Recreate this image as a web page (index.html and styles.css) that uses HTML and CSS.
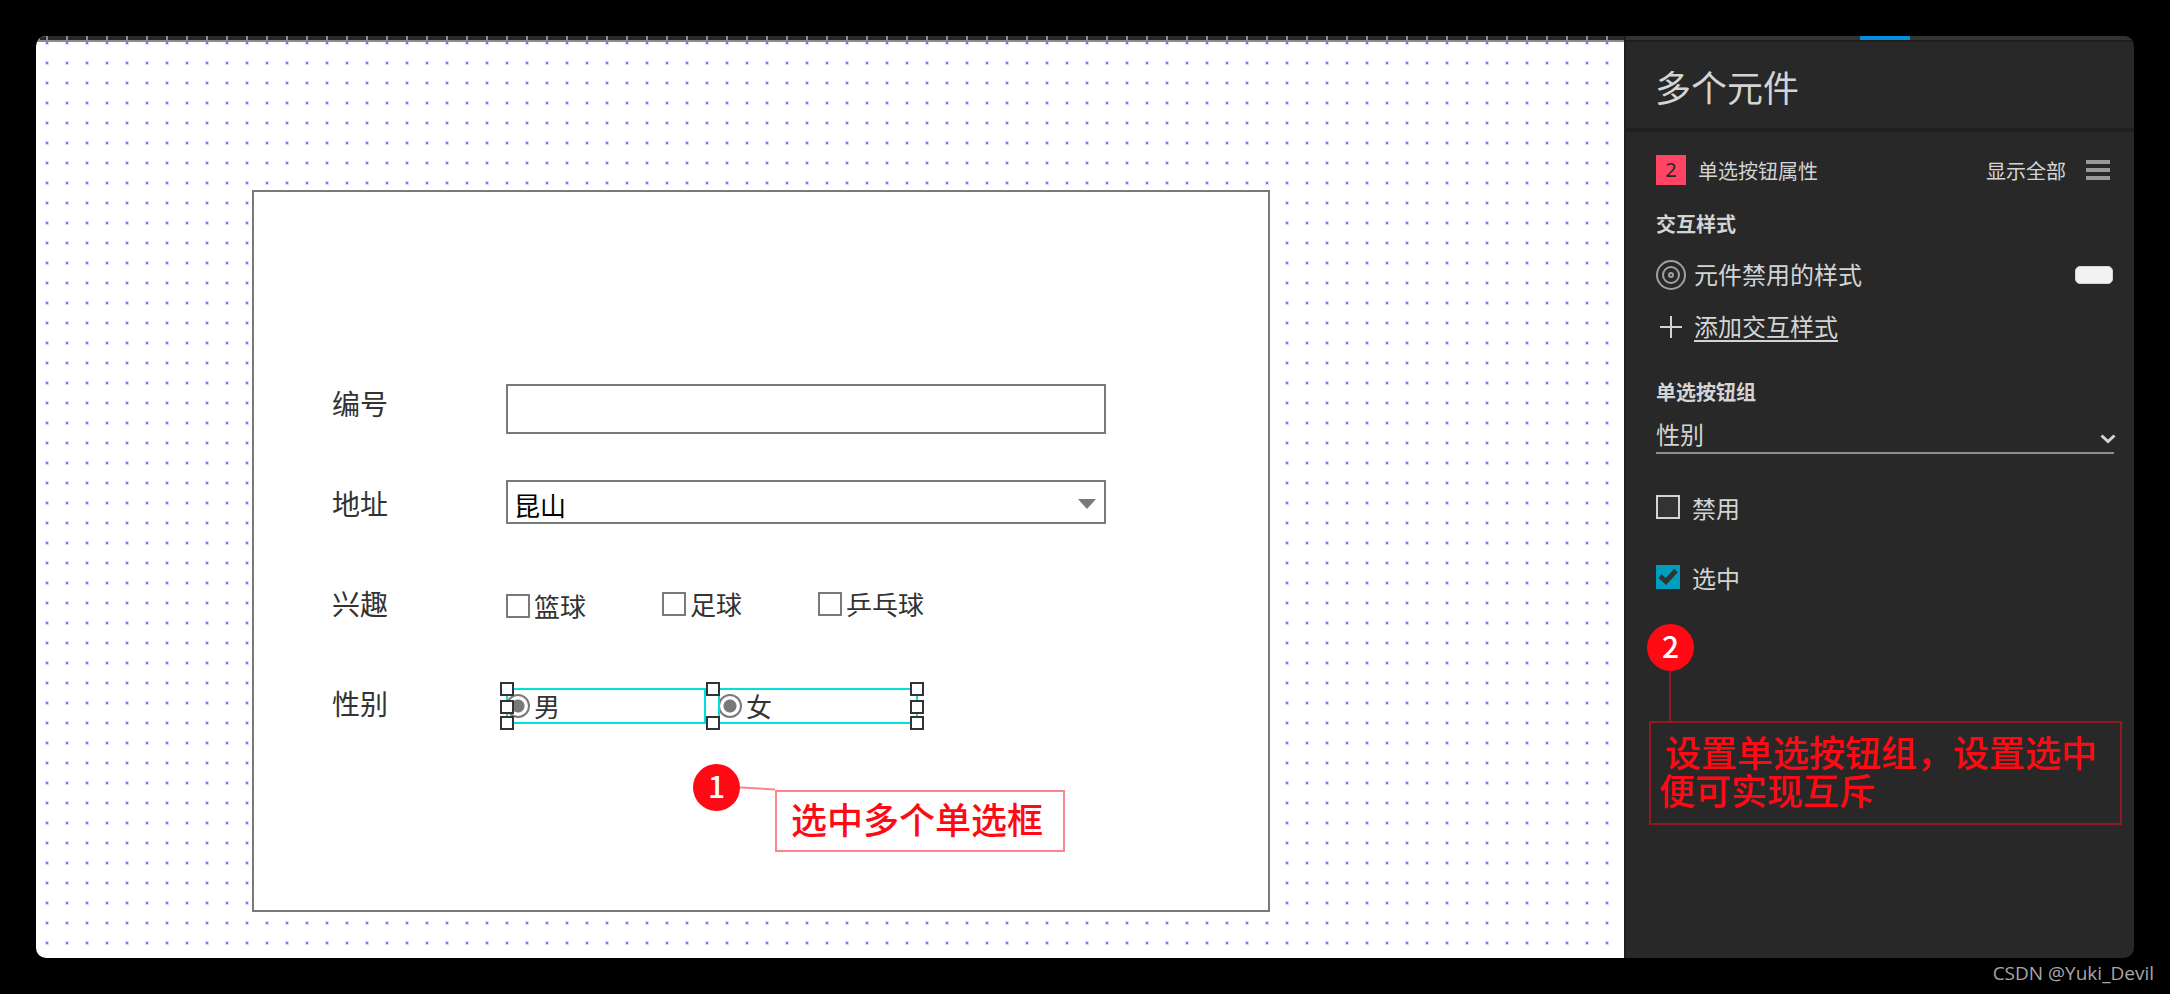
FILE: index.html
```html
<!DOCTYPE html>
<html lang="zh-CN">
<head>
    <meta charset="UTF-8">
    <meta name="viewport" content="width=device-width, initial-scale=1.0">
    <title>多个元件</title>
    <link rel="stylesheet" href="styles.css">
</head>
<body>

    <div class="window">
        <main class="workspace">
            <div class="ruler"></div>
            <div class="canvas">
                <form class="artboard">
                    <div class="row">
                        <label for="number">编号</label>
                        <input type="text" id="number" class="text-box">
                    </div>
                    <div class="row">
                        <label for="address">地址</label>
                        <div class="drop-down">
                            <select id="address">
                                <option>昆山</option>
                            </select>
                            <svg width="18" height="10" viewBox="0 0 18 10"><path d="M0 0h18L9 10z" fill="#797979"/></svg>
                        </div>
                    </div>
                    <div class="row">
                        <span class="row-title">兴趣</span>
                        <div class="checks">
                            <label><input type="checkbox">篮球</label>
                            <label><input type="checkbox">足球</label>
                            <label><input type="checkbox">乒乓球</label>
                        </div>
                    </div>
                    <div class="row">
                        <span class="row-title">性别</span>
                        <div class="radios">
                            <label><input type="radio" name="male" checked>男</label>
                            <label><input type="radio" name="female" checked>女</label>
                            <i class="handle left top"></i>
                            <i class="handle left middle"></i>
                            <i class="handle left bottom"></i>
                            <i class="handle center top"></i>
                            <i class="handle center bottom"></i>
                            <i class="handle right top"></i>
                            <i class="handle right middle"></i>
                            <i class="handle right bottom"></i>
                        </div>
                    </div>

                    <div class="note note-one">
                        <span class="note-number">1</span>
                        <svg class="note-line" width="35" height="6" viewBox="0 0 35 6"><path d="M0 1.5L35 3.5" stroke="#ff0a14" stroke-opacity="0.5" stroke-width="2"/></svg>
                        <p class="note-text">选中多个单选框</p>
                    </div>
                </form>
            </div>
        </main>

        <aside class="panel">
            <div class="tabs"><span class="tab-active"></span></div>
            <h2>多个元件</h2>
            <div class="properties">
                <div class="section-head">
                    <span class="count">2</span>
                    <span>单选按钮属性</span>
                    <button type="button" class="show-all">显示全部
                        <svg width="24" height="20" viewBox="0 0 24 20"><path d="M0 0h24v4H0zM0 8h24v4H0zM0 16h24v4H0z" fill="#999"/></svg>
                    </button>
                </div>

                <h3>交互样式</h3>
                <div class="style-row">
                    <svg width="30" height="30" viewBox="0 0 30 30" fill="none" stroke="#a0a0a0" stroke-width="2"><circle cx="15" cy="15" r="14"/><circle cx="15" cy="15" r="8"/><circle cx="15" cy="15" r="2"/></svg>
                    <span>元件禁用的样式</span>
                    <span class="swatch"></span>
                </div>
                <div class="style-row add-row">
                    <svg width="30" height="30" viewBox="0 0 30 30"><path d="M4 15h22M15 4v22" stroke="#d4d4d4" stroke-width="2"/></svg>
                    <a href="#">添加交互样式</a>
                </div>

                <h3 class="group-title"><label for="group">单选按钮组</label></h3>
                <div class="group">
                    <select id="group">
                        <option>性别</option>
                    </select>
                    <svg width="16" height="10" viewBox="0 0 16 10"><path d="M1.500 1.500L8 7.500l6.500-6" fill="none" stroke="#d4d4d4" stroke-width="3"/></svg>
                </div>

                <div class="options">
                    <label class="option"><input type="checkbox">禁用</label>
                    <label class="option">
                        <input type="checkbox" checked>
                        <svg class="tick" width="24" height="24" viewBox="0 0 24 24"><path d="M4 11l6 5.500L20 5.500" fill="none" stroke="#333" stroke-width="5"/></svg>
                        选中
                    </label>
                </div>
            </div>

            <div class="note note-two">
                <span class="note-number">2</span>
                <p class="note-text">设置单选按钮组，设置选中<br>便可实现互斥</p>
            </div>
        </aside>
    </div>

    <footer>CSDN @Yuki_Devil</footer>

</body>
</html>
```
FILE: styles.css
```css
* {
    box-sizing: border-box;
}
body {
    margin: 0;
    min-height: 100vh;
    display: flex;
    flex-direction: column;
    padding: 36px 36px 0;
    background: #000;
    color: #333;
    font-family: "Noto Sans", "Noto Sans CJK SC", sans-serif;
}
input, select, button {
    margin: 0;
    font-family: inherit;
}
input[type="checkbox"], input[type="radio"], select {
    appearance: none;
}
.window {
    flex: 1;
    display: flex;
    border-radius: 10px;
    overflow: hidden;
}
.workspace {
    flex: 1;
    display: flex;
    flex-direction: column;
    background: #fff;
}
.ruler {
    height: 6px;
    border-bottom: 2px solid #8c8c8c;
    background: repeating-linear-gradient(to right, #8c8c8c 0 2px, transparent 2px 20px) 10px 0, #282828;
}
.canvas {
    flex: 1;
    display: flex;
    padding: 148px 354px 46px 216px;
    /* grid dots: solid centre with a pale edge */
    background:
        conic-gradient(from 90deg at 18px 18px, #7575ff 90deg, transparent 0) -8px -18px / 20px 20px,
        conic-gradient(from 90deg at 16px 16px, #dcdcff 90deg, transparent 0) -7px -17px / 20px 20px;
}

/* wireframe form */
.artboard {
    position: relative;
    flex: 1;
    padding: 162px 78px 0;
    border: 2px solid #797979;
    background: #fff;
}
.row {
    display: grid;
    grid-template-columns: 174px 600px;
    align-items: center;
    height: 100px;
    font-size: 26px;
}
.row > label, .row-title {
    margin-bottom: 2px;
    font-size: 28px;
}
.text-box {
    height: 50px;
    margin-top: 10px;
    padding: 0 8px;
    border: 2px solid #797979;
    font-size: 26px;
}
.drop-down {
    position: relative;
    margin-bottom: 4px;
}
.drop-down select {
    display: block;
    width: 100%;
    height: 44px;
    padding: 6px 6px 0;
    border: 2px solid #797979;
    background: #fff;
    color: #000;
    font-size: 26px;
}
.drop-down svg {
    position: absolute;
    right: 10px;
    top: 19px;
}
.checks {
    display: flex;
}
.checks label {
    display: flex;
    align-items: center;
    gap: 4px;
    width: 156px;
}
.checks label:first-child {
    margin-top: 4px;
}
.checks input {
    width: 24px;
    height: 24px;
    border: 2px solid #797979;
}
.radios {
    position: relative;
    display: flex;
    gap: 12px;
    width: 412px;
    margin-top: 4px;
}
.radios label {
    position: relative;
    display: flex;
    align-items: center;
    gap: 4px;
    width: 200px;
    height: 36px;
}
.radios label::after {
    content: "";
    position: absolute;
    inset: 0;
    border: 2px solid #00e1dc;
}
.radios input {
    width: 24px;
    height: 24px;
    border: 2px solid #797979;
    border-radius: 50%;
    background: #fff;
}
.radios input:checked {
    background: radial-gradient(circle, #797979 6px, #fff 7px);
}
.handle {
    position: absolute;
    width: 14px;
    height: 14px;
    border: 2px solid #333;
    background: #fff;
}
.left { left: -6px; }
.center { left: 200px; }
.right { right: -6px; }
.top { top: -6px; }
.middle { top: 12px; }
.bottom { bottom: -6px; }

/* numbered notes */
.note {
    position: absolute;
}
.note-number {
    display: block;
    width: 47px;
    height: 47px;
    border-radius: 50%;
    background: #ff0a14;
    color: #fff;
    font-family: "Noto Sans CJK SC", sans-serif;
    font-size: 30px;
    font-weight: 500;
    line-height: 42px;
    text-align: center;
}
.note-text {
    margin: 0;
    border: 2px solid rgba(255, 10, 20, 0.5);
    color: #ff0a14;
    font-size: 36px;
    font-weight: 500;
    line-height: 38px;
    white-space: nowrap;
}
.note-one {
    left: 439px;
    top: 572px;
    display: flex;
}
.note-one .note-line {
    margin-top: 22px;
}
.note-one .note-text {
    width: 290px;
    height: 62px;
    margin-top: 26px;
    padding: 10px 14px;
}
.note-two {
    left: 21px;
    right: 12px;
    top: 588px;
}
.note-two::before {
    content: "";
    position: absolute;
    left: 22px;
    top: 47px;
    height: 50px;
    border-left: 2px solid rgba(255, 10, 20, 0.5);
}
.note-two .note-text {
    height: 104px;
    margin: 50px 0 0 2px;
    padding: 12px 8px;
    text-indent: 6px;
}

/* properties panel */
.panel {
    position: relative;
    width: 510px;
    border-left: 2px solid #1f1f1f;
    background: #282828;
    color: #d4d4d4;
}
.tabs {
    height: 6px;
    border-bottom: 2px solid #1f1f1f;
    background: #333;
}
.tab-active {
    display: block;
    width: 50px;
    height: 4px;
    margin-left: 234px;
    background: #0090e0;
}
.panel h2 {
    height: 90px;
    margin: 0;
    padding: 8px 29px 0;
    border-bottom: 4px solid #1f1f1f;
    font-size: 36px;
    font-weight: 400;
    line-height: 78px;
}
.properties {
    padding: 23px 20px 0 30px;
    font-size: 24px;
}
.section-head {
    display: flex;
    align-items: center;
    height: 30px;
    font-size: 20px;
}
.count {
    width: 30px;
    margin-right: 12px;
    background: #ff4563;
    color: #282828;
    line-height: 30px;
    text-align: center;
}
.show-all {
    display: flex;
    align-items: center;
    gap: 20px;
    margin-left: auto;
    padding: 0 4px 0 0;
    border: 0;
    background: none;
    color: inherit;
    font-size: 20px;
}
.panel h3 {
    height: 30px;
    margin: 25px 0 0;
    font-size: 20px;
    font-weight: 700;
    line-height: 30px;
}
.style-row {
    display: flex;
    align-items: center;
    gap: 8px;
    height: 30px;
    margin-top: 20px;
    line-height: 28px;
}
.add-row {
    margin-top: 22px;
}
.style-row a {
    color: inherit;
    text-decoration-thickness: 2px;
    text-underline-offset: 4px;
}
.swatch {
    width: 38px;
    height: 18px;
    margin: 0 1px 0 auto;
    border: 1px solid #d4d4d4;
    border-radius: 5px;
    background: #f2f2f2;
}
.panel .group-title {
    margin-top: 36px;
}
.group {
    position: relative;
    margin-top: 8px;
}
.group select {
    display: block;
    width: 100%;
    height: 38px;
    padding: 0;
    border: 0;
    border-bottom: 2px solid #8f8f8f;
    background: none;
    color: inherit;
    font-size: 24px;
}
.group svg {
    position: absolute;
    right: -2px;
    top: 18px;
}
.options {
    display: flex;
    flex-direction: column;
    align-items: flex-start;
    gap: 40px;
    margin-top: 38px;
}
.option {
    position: relative;
    display: flex;
    align-items: center;
    gap: 12px;
    height: 30px;
}
.option input {
    width: 24px;
    height: 24px;
    border: 2px solid #d4d4d4;
    background: #333;
}
.option input:checked {
    border: 0;
    background: #009dbf;
}
.tick {
    position: absolute;
    left: 0;
    top: 3px;
}

footer {
    height: 36px;
    margin-right: -20px;
    color: #a6a6a6;
    font-family: "Open Sans", sans-serif;
    font-size: 19px;
    line-height: 30px;
    text-align: right;
}
```
